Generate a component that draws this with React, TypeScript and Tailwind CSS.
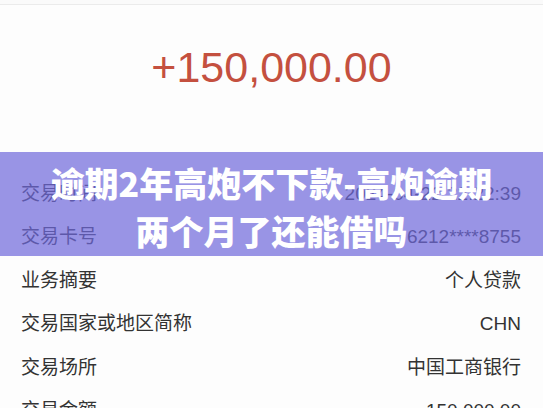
import React from "react";

const rows: [string, string][] = [
  ["交易时间", "2024-04-22 22:22:39"],
  ["交易卡号", "6212****8755"],
  ["业务摘要", "个人贷款"],
  ["交易国家或地区简称", "CHN"],
  ["交易场所", "中国工商银行"],
  ["交易金额", "150,000.00"],
];

const font = {
  fontFamily: '"Liberation Sans", "Noto Sans CJK SC", sans-serif',
};

export default function App() {
  return (
    <div
      className="relative w-[543px] h-[408px] overflow-hidden bg-[#fdfdfd]"
      style={font}
    >
      <div className="h-[4px] bg-[#fafafa]" />
      <div className="h-px bg-[#ebebeb]" />
      <div className="h-[167px] flex flex-col items-center pt-[41px]">
        <div className="h-[43px] text-[43px] leading-none text-[#c4503f]">
          +150,000.00
        </div>
      </div>
      <div className="flex flex-col">
        {rows.map(([k, v]) => (
          <div
            key={k}
            className="h-[43.5px] flex items-center justify-between pl-[21px] pr-[22px] text-[19px] text-[#333333]"
          >
            <span>{k}</span>
            <span>{v}</span>
          </div>
        ))}
      </div>
      <div className="absolute left-0 right-0 top-[152px] h-[104px] bg-[rgba(111,104,218,0.71)] flex flex-col items-center pt-[7px]">
        <div
          className="text-white text-[34px] leading-[48px] font-black text-center"
          style={{ fontFamily: '"Noto Sans CJK SC", sans-serif' }}
        >
          逾期2年高炮不下款-高炮逾期
        </div>
        <div
          className="text-white text-[34px] leading-[48px] font-black text-center"
          style={{ fontFamily: '"Noto Sans CJK SC", sans-serif' }}
        >
          两个月了还能借吗
        </div>
      </div>
    </div>
  );
}
